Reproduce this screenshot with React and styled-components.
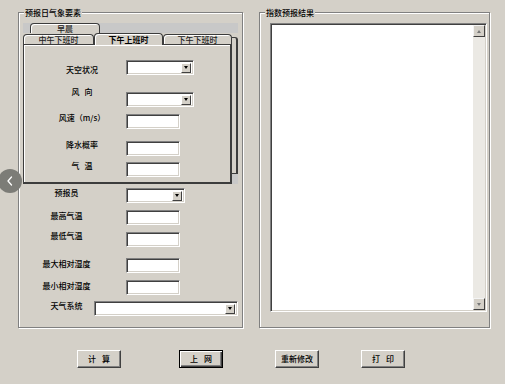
import React from 'react';
import styled, { createGlobalStyle } from 'styled-components';

const Global = createGlobalStyle`
  html, body { margin: 0; padding: 0; background: #d4d0c8; }
  body { font-family: "Noto Sans CJK SC", "Liberation Sans", sans-serif; }
`;

const Page = styled.div`
  position: relative;
  width: 505px;
  height: 384px;
  overflow: hidden;
  box-sizing: border-box;
  padding: 12px 0 0 18px;
  background: #d4d0c8;
  font-family: "Noto Sans CJK SC", "Liberation Sans", sans-serif;
  font-size: 8px;
  font-weight: 500;
  color: #000;
  word-spacing: 3px;
`;

const Groups = styled.div`
  display: flex;
  gap: 16px;
  height: 316px;
`;

const GroupBox = styled.div`
  position: relative;
  box-sizing: border-box;
  width: ${p => p.$w}px;
  height: 316px;
  border: 1px solid #808080;
  box-shadow: inset 1px 1px 0 #fff, 1px 1px 0 #fff;
`;

const GroupTitle = styled.span`
  position: absolute;
  top: -5px;
  left: 5px;
  padding: 0 1px;
  background: #d4d0c8;
  font-size: 8px;
  line-height: 9px;
  color: #000;
  white-space: nowrap;
`;

/* ---------- tabs ---------- */
const TabWidget = styled.div`
  margin: 10px 0 0 4px;
  width: 215px;
`;

const TabStrip = styled.div`
  height: 10px;
  background: #c8c8c8;
  display: flex;
  align-items: flex-end;
  padding-left: 7px;
`;

const TabRow = styled.div`
  display: flex;
  align-items: flex-end;
  height: 11px;
`;

const Tab = styled.div`
  position: relative;
  z-index: ${p => (p.$active ? 2 : 1)};
  box-sizing: border-box;
  width: ${p => p.$w}px;
  height: ${p => (p.$active ? 12 : 10)}px;
  margin-bottom: ${p => (p.$active ? -1 : 0)}px;
  border: 1px solid #3c3c3c;
  border-bottom: none;
  border-radius: 4px 4px 0 0;
  box-shadow: inset 1px 1px 0 #fff;
  background: #d4d0c8;
  display: flex;
  align-items: center;
  justify-content: center;
  font-size: 8px;
  line-height: 8px;
  font-weight: ${p => (p.$active ? 700 : 500)};
  color: ${p => (p.$active ? '#000' : '#222')};
  white-space: nowrap;
`;

const TabBody = styled.div`
  display: flex;
`;

const TabColumn = styled.div`
  width: 209px;
`;

const Panel = styled.div`
  box-sizing: border-box;
  width: 209px;
  height: 140px;
  border: 1px solid #3c3c3c;
  border-right-width: 2px;
  border-bottom-width: 2px;
  box-shadow: inset 1px 1px 0 #fff;
  background: #d4d0c8;
`;

const Side = styled.div`
  width: 6px;
  display: flex;
  flex-direction: column;
  padding-top: 4px;
`;

const SideEdge = styled.div`
  flex: 1;
  border-top: 1px solid #3c3c3c;
  border-right: 2px solid #3c3c3c;
  border-bottom: 1px solid #3c3c3c;
  border-top-right-radius: 3px;
`;

const SideFoot = styled.div`
  height: 10px;
  background: #c8c8c8;
`;

/* ---------- fields ---------- */
const FieldRow = styled.div`
  display: grid;
  grid-template-columns: ${p => p.$lw}px auto;
  column-gap: ${p => p.$gap || 0}px;
  align-items: start;
  justify-content: start;
  height: 15px;
  margin-top: ${p => p.$mt}px;
  padding-left: ${p => p.$pl}px;
`;

const Label = styled.span`
  text-align: center;
  font-size: 8px;
  line-height: 8px;
  white-space: nowrap;
  color: #000;
  margin-top: ${p => p.$dy || 0}px;
`;

const Sunken = styled.div`
  box-sizing: border-box;
  width: ${p => p.$w}px;
  height: 15px;
  background: #fff;
  border-top: 1px solid #808080;
  border-left: 1px solid #808080;
  border-right: 1px solid #fff;
  border-bottom: 1px solid #fff;
  box-shadow: inset 1px 1px 0 #404040, inset -1px -1px 0 #d4d0c8;
`;

const SelectBox = styled(Sunken)`
  display: flex;
  justify-content: flex-end;
  align-items: center;
  padding-right: 2px;
`;

const DropBtn = styled.span`
  box-sizing: border-box;
  width: 10px;
  height: 10px;
  background: #d4d0c8;
  border-top: 1px solid #fff;
  border-left: 1px solid #fff;
  border-right: 1px solid #404040;
  border-bottom: 1px solid #404040;
  display: flex;
  align-items: center;
  justify-content: center;
  &::after {
    content: '';
    width: 0;
    height: 0;
    border-left: 2.5px solid transparent;
    border-right: 2.5px solid transparent;
    border-top: 3px solid #000;
  }
`;

/* ---------- right side ---------- */
const TextArea = styled.div`
  box-sizing: border-box;
  margin: 10px 0 0 10px;
  width: 217px;
  height: 289px;
  display: flex;
  padding: 1px;
  background: #fff;
  border-top: 1px solid #808080;
  border-left: 1px solid #808080;
  border-right: 1px solid #fff;
  border-bottom: 1px solid #fff;
  box-shadow: inset 1px 1px 0 #404040, inset -1px -1px 0 #d4d0c8;
`;

const TextContent = styled.div`
  flex: 1;
  background: #fff;
`;

const ScrollBar = styled.div`
  width: 12px;
  background: #ebe9e4;
  display: flex;
  flex-direction: column;
  justify-content: space-between;
`;

const ArrowBtn = styled.span`
  box-sizing: border-box;
  width: 12px;
  height: 12px;
  background: #d4d0c8;
  border-top: 1px solid #f4f4f4;
  border-left: 1px solid #f4f4f4;
  border-right: 1px solid #404040;
  border-bottom: 1px solid #404040;
  display: flex;
  align-items: center;
  justify-content: center;
  &::after {
    content: '';
    width: 0;
    height: 0;
    border-left: 2.5px solid transparent;
    border-right: 2.5px solid transparent;
    ${p => (p.$up ? 'border-bottom: 3px solid #777;' : 'border-top: 3px solid #777;')}
  }
`;

/* ---------- buttons ---------- */
const ButtonBar = styled.div`
  display: flex;
  margin-top: 22px;
`;

const WinButton = styled.button`
  box-sizing: border-box;
  width: 44px;
  height: 18px;
  margin: 0 0 0 ${p => p.$ml}px;
  padding: 0;
  background: #d4d0c8;
  font-family: "Noto Sans CJK SC", "Liberation Sans", sans-serif;
  font-size: 8px;
  font-weight: 500;
  line-height: 8px;
  color: #000;
  word-spacing: 4px;
  border: 1px solid;
  border-color: #fff #404040 #404040 #fff;
  box-shadow: inset -1px -1px 0 #808080;
  ${p =>
    p.$default &&
    `
    border-color: #000;
    box-shadow: inset 1px 1px 0 #fff, inset -1px -1px 0 #404040, inset -2px -2px 0 #808080;
  `}
`;

/* ---------- overlay ---------- */
const NavCircle = styled.div`
  position: absolute;
  left: -2px;
  top: 169px;
  width: 24px;
  height: 24px;
  border-radius: 50%;
  background: #7c7c77;
  display: flex;
  align-items: center;
  justify-content: center;
`;

const panelRows = [
  { label: '天空状况', mt: 15, dy: 6, kind: 'select', w: 68 },
  { label: '风 向', mt: 17, dy: -4, kind: 'select', w: 68 },
  { label: '风速（m/s）', mt: 7, dy: 0, kind: 'input', w: 54 },
  { label: '降水概率', mt: 12, dy: 0, kind: 'input', w: 54 },
  { label: '气 温', mt: 6, dy: 0, kind: 'input', w: 54 },
];

const outerRows = [
  { label: '预报员', mt: 4, dy: 1, kind: 'select', w: 59 },
  { label: '最高气温', mt: 7, dy: 2, kind: 'input', w: 54 },
  { label: '最低气温', mt: 7, dy: 0, kind: 'input', w: 54 },
  { label: '最大相对湿度', mt: 11, dy: 2, kind: 'input', w: 54 },
  { label: '最小相对湿度', mt: 7, dy: 2, kind: 'input', w: 54 },
];

const buttons = [
  { text: '计 算', ml: 59 },
  { text: '上 网', ml: 58, def: true },
  { text: '重新修改', ml: 52 },
  { text: '打 印', ml: 42 },
];

function Control({ kind, w }) {
  if (kind === 'select') {
    return (
      <SelectBox $w={w}>
        <DropBtn />
      </SelectBox>
    );
  }
  return <Sunken $w={w} />;
}

export default function App() {
  return (
    <>
      <Global />
      <Page>
        <Groups>
          <GroupBox $w={225}>
            <GroupTitle>预报日气象要素</GroupTitle>
            <TabWidget>
              <TabStrip>
                <Tab $w={70}>早晨</Tab>
              </TabStrip>
              <TabBody>
                <TabColumn>
                  <TabRow>
                    <Tab $w={71}>中午下班时</Tab>
                    <Tab $w={69} $active>下午上班时</Tab>
                    <Tab $w={69}>下午下班时</Tab>
                  </TabRow>
                  <Panel>
                    {panelRows.map(r => (
                      <FieldRow key={r.label} $lw={88} $pl={14} $mt={r.mt}>
                        <Label $dy={r.dy}>{r.label}</Label>
                        <Control kind={r.kind} w={r.w} />
                      </FieldRow>
                    ))}
                  </Panel>
                </TabColumn>
                <Side>
                  <SideEdge />
                  <SideFoot />
                </Side>
              </TabBody>
            </TabWidget>
            {outerRows.map(r => (
              <FieldRow key={r.label} $lw={87} $gap={16} $pl={4} $mt={r.mt}>
                <Label $dy={r.dy}>{r.label}</Label>
                <Control kind={r.kind} w={r.w} />
              </FieldRow>
            ))}
            <FieldRow $lw={55} $pl={20} $mt={6}>
              <Label $dy={1}>天气系统</Label>
              <Control kind="select" w={144} />
            </FieldRow>
          </GroupBox>
          <GroupBox $w={231}>
            <GroupTitle>指数预报结果</GroupTitle>
            <TextArea>
              <TextContent />
              <ScrollBar>
                <ArrowBtn $up />
                <ArrowBtn />
              </ScrollBar>
            </TextArea>
          </GroupBox>
        </Groups>
        <ButtonBar>
          {buttons.map(b => (
            <WinButton key={b.text} $ml={b.ml} $default={b.def}>
              {b.text}
            </WinButton>
          ))}
        </ButtonBar>
        <NavCircle>
          <svg width="10" height="12" viewBox="0 0 10 12" fill="none">
            <path d="M6.5 2 L3 6 L6.5 10" stroke="#fff" strokeWidth="1.3" strokeLinecap="round" strokeLinejoin="round" />
          </svg>
        </NavCircle>
      </Page>
    </>
  );
}
